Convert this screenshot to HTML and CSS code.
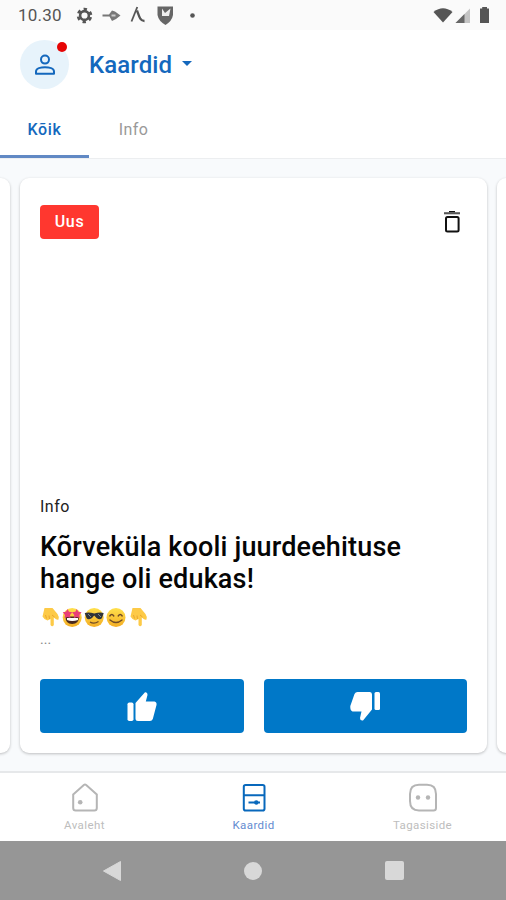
FILE: index.html
```html
<!DOCTYPE html>
<html lang="et">
<head>
<meta charset="utf-8">
<title>Kaardid</title>
<link rel="stylesheet" href="styles.css">
</head>
<body>
<div class="screen">
  <div class="status">
    <span class="clock">10.30</span>
    <svg class="status-left" width="124" height="22" viewBox="75 5 124 22">
      <circle cx="84.500" cy="15.500" r="4.400" fill="none" stroke="#555" stroke-width="2.600"/>
      <circle cx="84.500" cy="15.500" r="6.500" fill="none" stroke="#555" stroke-width="2.600" stroke-dasharray="3.400 3.407" stroke-dashoffset="-1.700"/>
      <path d="M102.500 14.500H109L112 10.500L115 11.500L120.500 15.500L116 19L112 21L109.500 16.500H102.500Z" fill="#777"/>
      <path d="M111.500 14.500h4v2h-4z" fill="#ccc"/>
      <path d="M131.500 21.500L137.300 7" stroke="#555" stroke-width="1.800"/>
      <path d="M137 10.500C139 16 140 21 144.500 21" fill="none" stroke="#555" stroke-width="2.300"/>
      <path d="M157.500 6.500H173V15Q172 21 165.500 25Q158.500 21 157.500 15Z" fill="#666"/>
      <path d="M162 8.500L165 13L170.500 8.500L169 16H162Z" fill="#eee"/>
      <circle cx="192.500" cy="15.500" r="2.300" fill="#555"/>
    </svg>
    <svg class="status-right" width="60" height="22" viewBox="432 5 60 22">
      <path d="M433.500 12Q443 4.500 452.500 12L443 22.500Z" fill="#555"/>
      <path d="M455.500 23L470 8.500V23Z" fill="#c4c4c4"/>
      <path d="M455.500 23L464.500 14V23Z" fill="#666"/>
      <path d="M482.200 7H487V8.500H489V23H480V8.500H482.200Z" fill="#555"/>
    </svg>
  </div>
  <header class="header">
    <div class="avatar">
      <svg width="22" height="22" viewBox="0 0 22 22" fill="none" stroke="#1468bd" stroke-width="2">
        <circle cx="11" cy="5.600" r="4"/>
        <path d="M2 19.700V17.500C2 14.400 7 13.200 11 13.200S20 14.400 20 17.500V19.700Z" stroke-linejoin="round"/>
      </svg>
      <span class="badge"></span>
    </div>
    <h1 class="heading">Kaardid</h1>
    <span class="caret"></span>
  </header>
  <nav class="tabs">
    <span class="tab tab-active">Kõik</span>
    <span class="tab">Info</span>
  </nav>
  <main class="deck">
    <div class="card card-prev"></div>
    <article class="card card-main">
      <div class="card-top">
        <span class="tag">Uus</span>
        <svg class="trash" width="18" height="24" viewBox="0 0 18 24">
          <path d="M6 1H12V2.500H6Z" fill="#111"/>
          <path d="M1 2.200H17V4.300H1Z" fill="#555"/>
          <rect x="3" y="7" width="12.600" height="14.500" rx="1.500" fill="none" stroke="#111" stroke-width="2"/>
        </svg>
      </div>
      <p class="category">Info</p>
      <h2 class="title">Kõrveküla kooli juurdeehituse hange oli edukas!</h2>
      <svg class="emojis" width="110" height="22" viewBox="0 0 110 22">
        <defs>
          <linearGradient id="face" x1="0" y1="0" x2="0" y2="1"><stop offset="0" stop-color="#ffe04c"/><stop offset="1" stop-color="#f4ae25"/></linearGradient>
          <g id="point">
            <path d="M4.500 1H12.500L17.500 7Q19.500 10 18.500 12.500Q17 13.500 13.800 10.500V18Q12.300 20.500 10.500 18V12L7.500 13.500L4.500 12L2.500 9.500Z" fill="#fdca47"/>
            <path d="M5.500 8L6.500 11.500M9 8.500L9.500 12M12 8L14.500 10" fill="none" stroke="#eaa62f" stroke-width="1"/>
          </g>
        </defs>
        <use href="#point"/>
        <circle cx="32.200" cy="10.500" r="9.500" fill="url(#face)"/>
        <path d="M25.500 9.500H39Q39 17 32.200 17T25.500 9.500Z" fill="#49291f"/>
        <path d="M27 11H38V13Q32 15 27 13Z" fill="#fff"/>
        <path id="star" d="M27.500 2L29 4.700L32.300 5.200L30 8L30.500 11L27.500 10L24.500 11L25 8L22.700 5.200L26 4.700Z" fill="#e83f78"/>
        <use href="#star" x="9.300"/>
        <circle cx="54.200" cy="10.500" r="9.500" fill="url(#face)"/>
        <path d="M44.700 6Q49 5 54.200 6.500Q60 5 63.700 6L62 11Q60 13.500 56.500 11L54.200 8.500L52 11Q48 13.500 46.500 11Z" fill="#30343a"/>
        <path d="M48 7L51 10M58 7L61 10" stroke="#7b8992"/>
        <path d="M50 15Q54 17.500 58.500 14.500" fill="none" stroke="#704b27" stroke-width="1.400"/>
        <circle cx="76" cy="10.500" r="9.500" fill="url(#face)"/>
        <path d="M69.800 9Q71.800 6 73.800 9M78.200 9Q80.200 6 82.200 9M70 13Q76 18 82 13" fill="none" stroke="#704b27" stroke-width="1.400" stroke-linecap="round"/>
        <use href="#point" x="88"/>
      </svg>
      <p class="more">...</p>
      <div class="votes">
        <button class="vote" aria-label="Meeldib">
          <svg width="30" height="31" viewBox="0 0 30 31" fill="#fff">
            <rect x="0.500" y="11.500" width="6" height="18.500" rx="1.800"/>
            <path d="M8.500 12L18 1.200Q20.500 1 20.500 4L18.800 10.500H27.500Q30 11 29.500 14L25.800 28Q25 30 23 30H11Q8.500 30 8.500 27.500Z"/>
          </svg>
        </button>
        <button class="vote" aria-label="Ei meeldi">
          <svg width="30" height="31" viewBox="0 0 30 31" fill="#fff">
            <rect x="24.500" y="1" width="5.500" height="18" rx="1.500"/>
            <path d="M22 18.500L13 29.500Q10 30 10 27L11.500 20.500H2.500Q0 19.500 0.300 15L4.500 3Q5.500 1 7.500 1H20Q22 1 22 3.500Z"/>
          </svg>
        </button>
      </div>
    </article>
    <div class="card card-next"></div>
  </main>
  <nav class="bottom">
    <div class="item">
      <svg width="28" height="30" viewBox="0 0 28 30" fill="none" stroke="#b5b5b5" stroke-width="2">
        <path d="M2.200 11.500L12.800 2Q14 1.200 15.200 2L25.800 11.500V25Q25.800 27.500 23.300 27.500H4.700Q2.200 27.500 2.200 25Z"/>
        <circle cx="9.200" cy="19.300" r="2.300" fill="#b5b5b5" stroke="none"/>
      </svg>
      <span>Avaleht</span>
    </div>
    <div class="item item-active">
      <svg width="28" height="30" viewBox="0 0 28 30" fill="none" stroke="#0868bc" stroke-width="2">
        <rect x="3.800" y="2" width="20.700" height="25.500" rx="1.800"/>
        <path d="M4 12.200H24.500M8.500 19.500H20"/>
        <circle cx="16.300" cy="19.500" r="2.200" fill="#0868bc" stroke="none"/>
      </svg>
      <span>Kaardid</span>
    </div>
    <div class="item">
      <svg width="28" height="30" viewBox="0 0 28 30" fill="none" stroke="#b5b5b5" stroke-width="2">
        <path d="M10 1.800H18Q27 1.800 27 11V25Q27 27.500 24.500 27.500H10Q1 27.500 1 18V11Q1 1.800 10 1.800Z"/>
        <circle cx="9" cy="14.500" r="2.200" fill="#b5b5b5" stroke="none"/>
        <circle cx="19" cy="14.500" r="2.200" fill="#b5b5b5" stroke="none"/>
      </svg>
      <span>Tagasiside</span>
    </div>
  </nav>
  <div class="system">
    <svg width="20" height="22" viewBox="0 0 20 22"><path d="M1.500 11L18.500 1.500V20.500Z" fill="#d8d8d8" stroke="#d8d8d8" stroke-linejoin="round"/></svg>
    <span class="home"></span>
    <span class="recent"></span>
  </div>
</div>
</body>
</html>
```

FILE: styles.css
```css
* { box-sizing: border-box; }
body { margin: 0; font-family: Roboto, sans-serif; background: #fff; }
h1, h2, p { margin: 0; }
svg { display: block; flex: none; }
.screen { width: 506px; height: 900px; display: flex; flex-direction: column; overflow: hidden; }
.status { height: 30px; flex: none; background: #fafafa; display: flex; align-items: flex-start; padding: 5px 14px 0 18px; color: #555; }
.clock { width: 57px; font-size: 17px; line-height: 21px; letter-spacing: .2px; }
.status-right { margin-left: auto; }
.header { height: 70px; flex: none; display: flex; align-items: center; padding: 0 20px 1px; }
.avatar { position: relative; width: 49px; height: 49px; border-radius: 50%; background: #e7f3fb; display: flex; align-items: center; justify-content: center; }
.badge { position: absolute; right: 2px; top: 2px; width: 10px; height: 10px; border-radius: 50%; background: #e60505; }
.heading { margin-left: 20px; font-size: 24px; font-weight: 500; line-height: 30px; letter-spacing: .1px; color: #1468bd; }
.caret { margin: -2px 0 0 10px; border: 5px solid transparent; border-top: 5px solid #1468bd; border-bottom: 0; }
.tabs { height: 59px; flex: none; display: flex; border-bottom: 1px solid #eceef0; font-size: 16px; font-weight: 400; letter-spacing: .35px; color: #999; }
.tab { width: 89px; height: 58px; line-height: 59px; text-align: center; }
.tab-active { font-weight: 500; letter-spacing: .7px; color: #1468bd; border-bottom: 3px solid #6189c4; }
.deck { height: 612px; flex: none; background: #f8fafc; display: grid; grid-template-columns: 20px 467px 20px; column-gap: 10px; margin-left: -10px; width: 517px; padding-top: 19px; overflow: hidden; }
.card { height: 575px; background: #fff; border-radius: 9px; box-shadow: 0 1px 3px rgba(0, 0, 0, .24); }
.card-main { display: flex; flex-direction: column; padding: 27px 20px 20px; }
.card-top { height: 34px; display: flex; justify-content: space-between; }
.tag { width: 59px; height: 34px; border-radius: 4px; background: #ff372f; color: #fff; font-size: 16px; font-weight: 500; line-height: 34px; letter-spacing: .7px; text-align: center; }
.trash { margin: 5px 6px 0 0; }
.category { margin-top: 257px; font-size: 16px; line-height: 22px; color: #222; letter-spacing: .5px; }
.title { margin-top: 13px; font-size: 27px; font-weight: 500; line-height: 32px; letter-spacing: .16px; color: #050505; }
.emojis { margin-top: 12px; }
.more { margin-top: 1px; font-size: 14px; line-height: 18px; color: #888; }
.votes { margin-top: auto; display: flex; gap: 20px; }
.vote { flex: 1; height: 54px; border: 0; border-radius: 4px; background: #0078c8; padding: 0; display: flex; align-items: center; justify-content: center; }
.bottom { height: 70px; flex: none; border-top: 2px solid #e6e8ea; display: grid; grid-template-columns: repeat(3, 169px); font-size: 11.5px; color: #bdbdbd; }
.item { display: flex; flex-direction: column; align-items: center; padding-top: 10px; }
.item span { line-height: 16px; margin-top: 4px; letter-spacing: .4px; }
.item-active { color: #648bd0; }
.system { height: 59px; flex: none; background: #969696; display: grid; grid-template-columns: repeat(3, 141px); justify-content: center; justify-items: center; align-items: center; }
.home { width: 18px; height: 18px; border-radius: 50%; background: #d8d8d8; }
.recent { width: 19px; height: 19px; border-radius: 2px; background: #d8d8d8; }
```
